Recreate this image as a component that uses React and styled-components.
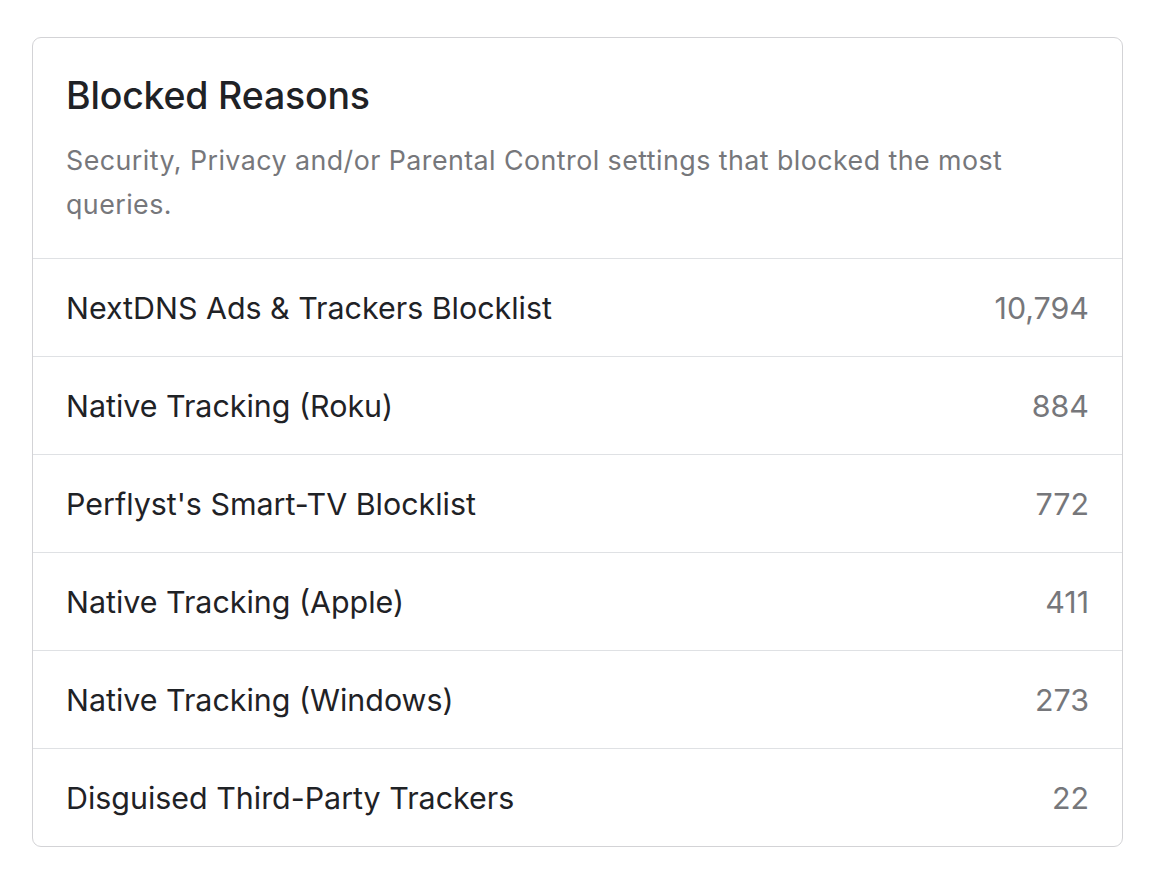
import React from 'react';
import styled, { createGlobalStyle } from 'styled-components';

const GlobalStyle = createGlobalStyle`
  html, body {
    margin: 0;
    padding: 0;
    background: #ffffff;
  }
  body {
    font-family: Inter, "Noto Sans", "Liberation Sans", sans-serif;
    color: #212529;
  }
`;

const Page = styled.div`
  padding: 37px 0 0 32px;
`;

const Card = styled.div`
  width: 1091px;
  box-sizing: border-box;
  border: 1px solid #d3d3d6;
  border-radius: 9px;
  background: #fff;
  overflow: hidden;
`;

const Header = styled.div`
  padding: 36px 33px 32px;
  border-bottom: 1px solid #dfe1e4;
`;

const Title = styled.h5`
  margin: 0 0 20px;
  font-size: 37.5px;
  font-weight: 500;
  line-height: 44px;
  letter-spacing: -0.2px;
  color: #1f2226;
`;

const Subtitle = styled.p`
  margin: 0;
  max-width: 1000px;
  font-size: 26.8px;
  letter-spacing: 0.45px;
  line-height: 44px;
  color: #76777b;
`;

const List = styled.ul`
  list-style: none;
  margin: 0;
  padding: 0;
`;

const Row = styled.li`
  display: flex;
  align-items: center;
  justify-content: space-between;
  height: 97px;
  padding: 0 33px;
  font-size: 30.4px;
  color: #1f2226;
  & + & {
    border-top: 1px solid #dfe1e4;
  }
`;

const Count = styled.span`
  color: #76777b;
`;

const reasons = [
  { name: 'NextDNS Ads & Trackers Blocklist', count: '10,794' },
  { name: 'Native Tracking (Roku)', count: '884' },
  { name: "Perflyst's Smart-TV Blocklist", count: '772' },
  { name: 'Native Tracking (Apple)', count: '411' },
  { name: 'Native Tracking (Windows)', count: '273' },
  { name: 'Disguised Third-Party Trackers', count: '22' },
];

export default function App() {
  return (
    <>
      <GlobalStyle />
      <Page>
        <Card>
          <Header>
            <Title>Blocked Reasons</Title>
            <Subtitle>
              Security, Privacy and/or Parental Control settings that blocked the most queries.
            </Subtitle>
          </Header>
          <List>
            {reasons.map((r) => (
              <Row key={r.name}>
                <span>{r.name}</span>
                <Count>{r.count}</Count>
              </Row>
            ))}
          </List>
        </Card>
      </Page>
    </>
  );
}
